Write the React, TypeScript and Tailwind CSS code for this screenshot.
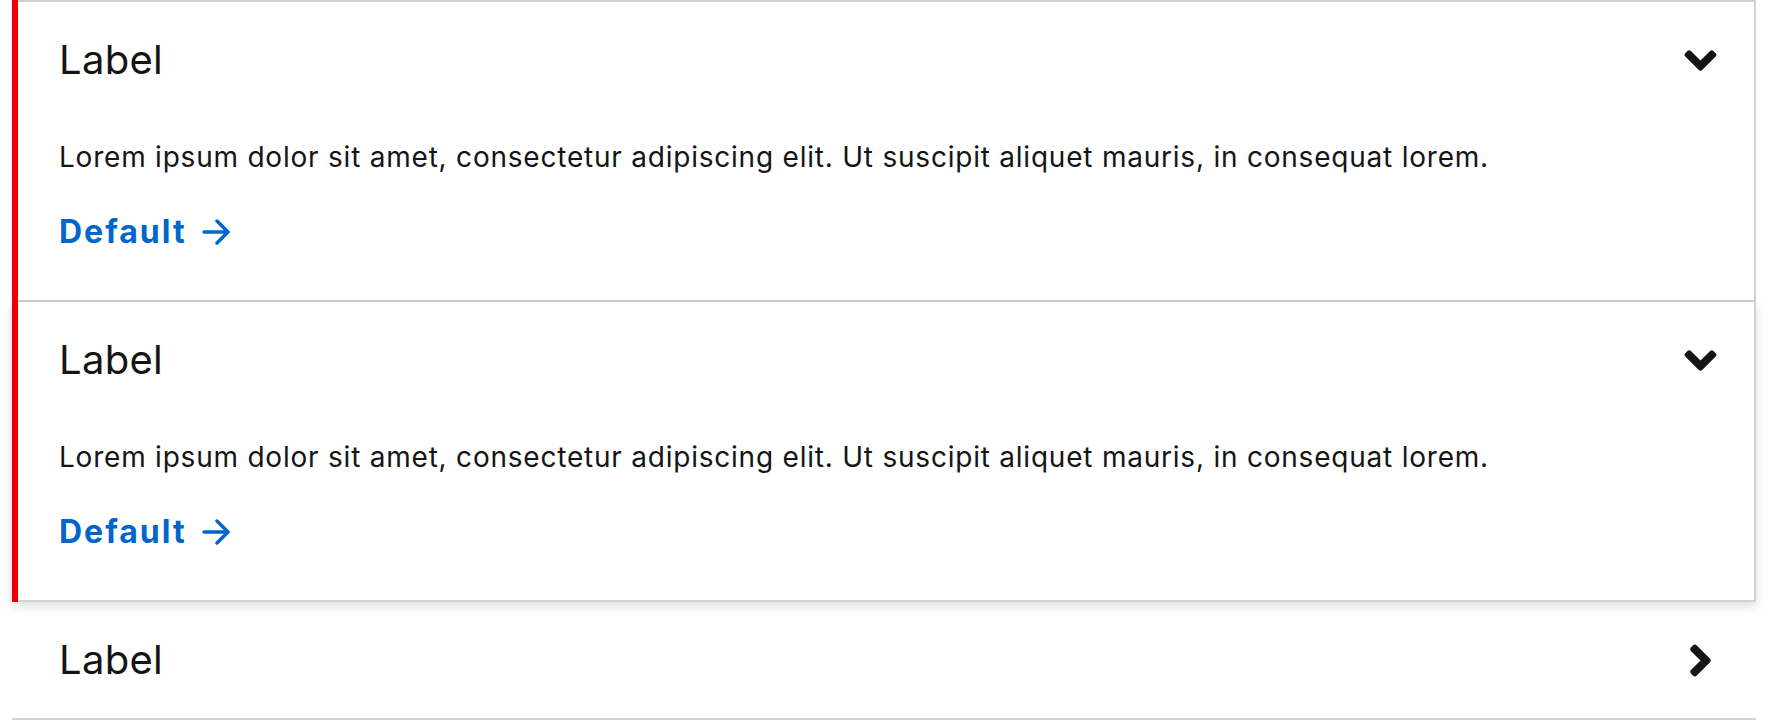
import { FaAngleDown, FaAngleRight } from "react-icons/fa";

const lorem =
  "Lorem ipsum dolor sit amet, consectetur adipiscing elit. Ut suscipit aliquet mauris, in consequat lorem.";

const Panel = () => (
  <div className="pt-[18px] pb-[44px]">
    <p className="text-[28px] leading-[42px] tracking-[0.78px] text-[#151515]">{lorem}</p>
    <a
      href="#"
      className="mt-[30px] inline-flex items-center gap-[15px] text-[32px] leading-[48px] font-bold text-[#0066cc]"
    >
      <span className="tracking-[2px]">Default</span>
      <svg width="30" height="26" viewBox="0 0 30 26" fill="none">
        <path
          d="M2 13h24M15 2l11 11-11 11"
          stroke="currentColor"
          strokeWidth="3.5"
          strokeLinecap="round"
          strokeLinejoin="round"
        />
      </svg>
    </a>
  </div>
);

const Header = ({ open }: { open: boolean }) => (
  <div className="h-[116px] flex items-center justify-between">
    <span className="text-[40px] tracking-[0.3px] text-[#151515]">Label</span>
    <span className="w-[51px] h-[51px] flex items-center justify-center text-[#151515]">
      {open ? <FaAngleDown size={51} /> : <FaAngleRight size={51} />}
    </span>
  </div>
);

export default function App() {
  return (
    <div
      className="bg-white px-[12px]"
      style={{ fontFamily: "Inter, 'Noto Sans', sans-serif" }}
    >
      {/* expanded */}
      <div className="flex">
        <div className="w-[6px] bg-[#ee0000]" />
        <div className="flex-1 border-t-2 border-r-2 border-b-2 border-[#d2d2d2] pl-[41px] pr-[28px]">
          <Header open />
          <Panel />
        </div>
      </div>

      {/* expanded + focused */}
      <div className="relative z-10 flex shadow-[0_4px_10px_rgba(21,21,21,0.14)]">
        <div className="w-[6px] bg-[#ee0000]" />
        <div className="flex-1 bg-white border-r-2 border-b-2 border-[#d2d2d2] pl-[41px] pr-[28px]">
          <Header open />
          <Panel />
        </div>
      </div>

      {/* collapsed */}
      <div className="bg-white border-b-2 border-[#d2d2d2] pl-[47px] pr-[30px]">
        <Header open={false} />
      </div>
    </div>
  );
}
